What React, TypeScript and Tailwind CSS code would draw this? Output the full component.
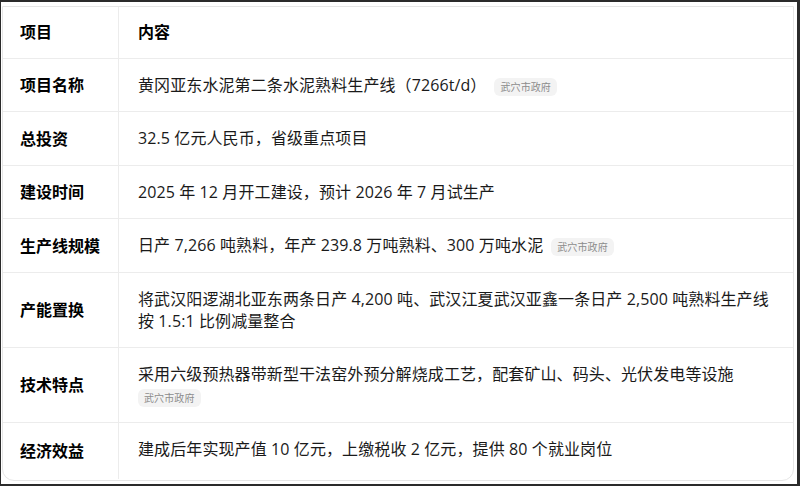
const rows: { label: string; content: string; badge?: "inline" | "block"; lines?: string[]; tall?: boolean }[] = [
  { label: "项目名称", content: "黄冈亚东水泥第二条水泥熟料生产线（7266t/d）", badge: "inline" },
  { label: "总投资", content: "32.5 亿元人民币，省级重点项目", tall: true },
  { label: "建设时间", content: "2025 年 12 月开工建设，预计 2026 年 7 月试生产" },
  { label: "生产线规模", content: "日产 7,266 吨熟料，年产 239.8 万吨熟料、300 万吨水泥", badge: "inline", tall: true },
  {
    label: "产能置换",
    content: "",
    lines: [
      "将武汉阳逻湖北亚东两条日产 4,200 吨、武汉江夏武汉亚鑫一条日产 2,500 吨熟料生产线",
      "按 1.5:1 比例减量整合",
    ],
  },
  { label: "技术特点", content: "采用六级预热器带新型干法窑外预分解烧成工艺，配套矿山、码头、光伏发电等设施", badge: "block" },
  { label: "经济效益", content: "建成后年实现产值 10 亿元，上缴税收 2 亿元，提供 80 个就业岗位" },
];

function Badge({ block }: { block?: boolean }) {
  return (
    <span
      className={`${block ? "mt-1 flex w-fit" : "ml-2 inline-flex align-middle"} h-[18px] items-center rounded-md bg-[#f3f3f3] px-[6px] text-[10px] leading-none text-[#8c8c8c]`}
    >
      武穴市政府
    </span>
  );
}

export default function App() {
  return (
    <div className="flex h-[486px] w-[800px] flex-col border-t-2 border-r-[3px] border-b-2 border-l border-[#2b2b2b] bg-white pt-1 pr-[3px] pb-[3px] pl-px font-['Open_Sans','Noto_Sans_CJK_SC',sans-serif] text-[#1a1a1a]">
      <div className="flex-1 overflow-hidden rounded-b-xl border border-[#e6e6e6]">
        {/* header */}
        <div className="grid grid-cols-[116px_1fr] border-b border-[#ececec]">
          <div className="border-r border-[#ececec] pt-[15px] pb-[15px] pl-[17px] text-[16px] leading-[21px] font-bold text-black">项目</div>
          <div className="pt-[15px] pb-[15px] pl-[19px] text-[16px] leading-[21px] font-bold text-black">内容</div>
        </div>
        {rows.map((r, i) => (
          <div
            key={r.label}
            className={`grid grid-cols-[116px_1fr] ${i < rows.length - 1 ? "border-b border-[#ececec]" : ""}`}
          >
            <div className="flex items-center border-r border-[#ececec] pl-[17px] text-[16px] font-bold text-black">
              {r.label}
            </div>
            <div
              className={`pt-[15px] pl-[19px] text-[16px] leading-[22px] tracking-[0.1px] ${
                i === rows.length - 1 ? "pb-[19px]" : r.tall ? "pb-[16px]" : "pb-[15px]"
              }`}
            >
              {r.lines ? (
                r.lines.map((l) => <div key={l}>{l}</div>)
              ) : (
                <div>
                  {r.content}
                  {r.badge === "inline" && <Badge />}
                </div>
              )}
              {r.badge === "block" && <Badge block />}
            </div>
          </div>
        ))}
      </div>
    </div>
  );
}
